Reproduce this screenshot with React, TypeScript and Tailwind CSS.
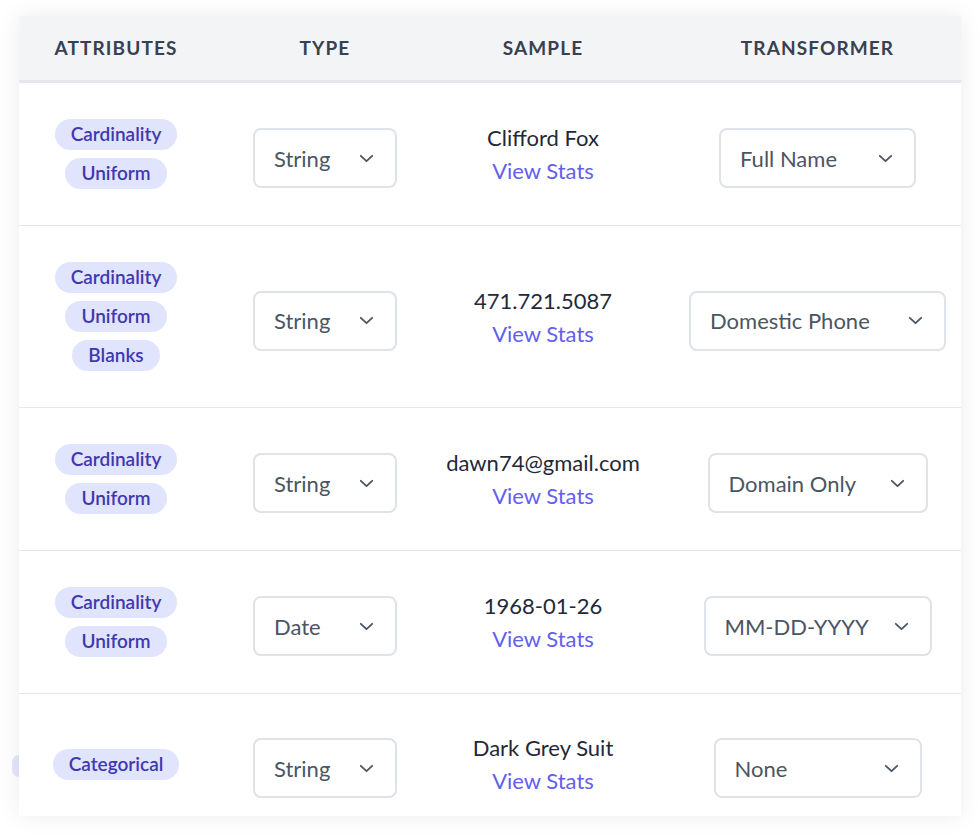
import React from 'react';

interface Row {
    tags: string[];
    type: string;
    sample: string;
    transformer: string;
    transformerWidth: string;
}

const rows: Row[] = [
    { tags: ['Cardinality', 'Uniform'], type: 'String', sample: 'Clifford Fox', transformer: 'Full Name', transformerWidth: 'w-[197px]' },
    { tags: ['Cardinality', 'Uniform', 'Blanks'], type: 'String', sample: '471.721.5087', transformer: 'Domestic Phone', transformerWidth: 'w-[257px]' },
    { tags: ['Cardinality', 'Uniform'], type: 'String', sample: 'dawn74@gmail.com', transformer: 'Domain Only', transformerWidth: 'w-[220px]' },
    { tags: ['Cardinality', 'Uniform'], type: 'Date', sample: '1968-01-26', transformer: 'MM-DD-YYYY', transformerWidth: 'w-[228px]' },
    { tags: ['Categorical'], type: 'String', sample: 'Dark Grey Suit', transformer: 'None', transformerWidth: 'w-[208px]' },
];

const Chevron = () => (
    <svg width="15" height="9" viewBox="0 0 15 9" fill="none" className="shrink-0">
        <path d="M1.8 1.8 7.5 7.2l5.7-5.4" stroke="#4b5563" strokeWidth="1.8" strokeLinecap="round" strokeLinejoin="round" />
    </svg>
);

const Select: React.FC<{ value: string; className: string }> = ({ value, className }) => (
    <div className={`mt-[8px] flex h-[60px] items-center justify-between rounded-lg border-2 border-[#dfe2e7] bg-white pl-[19px] pr-[21px] text-[22px] text-[#4b5563] ${className}`}>
        <span>{value}</span>
        <Chevron />
    </div>
);

const Tag: React.FC<{ label: string }> = ({ label }) => (
    <span className="flex h-[31px] items-center rounded-full bg-[#e1e4fd] px-[16px] text-[19px] font-semibold text-[#4038b0]">
        {label}
    </span>
);

export default function App() {
    return (
        <div className="relative min-h-[839px] bg-white pl-[19px] pt-[16px] font-['Lato',sans-serif]">
            <span className="absolute left-[12px] top-[755px] h-[22px] w-[14px] rounded-full bg-[#e4e7fd]" />
            <div className="relative h-[800px] w-[942px] overflow-hidden bg-white shadow-[0_0_22px_rgba(0,0,0,0.08)]">
                <div className="grid h-[67px] grid-cols-[194px_224px_212px_312px] items-center border-b-[3px] border-[#e5e7eb] bg-[#f3f4f6] text-[19px] font-bold tracking-[1.1px] text-[#374151]">
                    <div className="text-center">ATTRIBUTES</div>
                    <div className="text-center">TYPE</div>
                    <div className="text-center">SAMPLE</div>
                    <div className="pl-[25px] text-center">TRANSFORMER</div>
                </div>
                {rows.map((row, i) => (
                    <div key={i} className="grid grid-cols-[194px_224px_212px_312px] items-center border-b border-[#e5e7eb] py-[36px]">
                        <div className="flex flex-col items-center gap-[8px]">
                            {row.tags.map(tag => <Tag key={tag} label={tag} />)}
                        </div>
                        <div className="flex justify-center">
                            <Select value={row.type} className="w-[144px]" />
                        </div>
                        <div className="flex flex-col items-center text-[22px] leading-[33px]">
                            <span className="text-[#1f2937]">{row.sample}</span>
                            <span className="text-[#6360ee]">View Stats</span>
                        </div>
                        <div className="flex justify-center pl-[25px]">
                            <Select value={row.transformer} className={row.transformerWidth} />
                        </div>
                    </div>
                ))}
            </div>
        </div>
    );
}
